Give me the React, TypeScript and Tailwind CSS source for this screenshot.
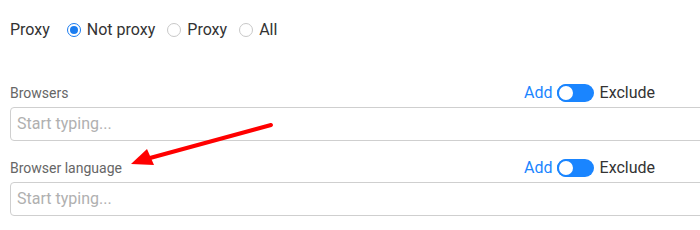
import React from "react";

const font = { fontFamily: "Roboto, 'Liberation Sans', sans-serif" };

function Radio({ label, checked }: { label: string; checked?: boolean }) {
  return (
    <label className="flex items-center gap-[6px]">
      <span
        className={`flex h-[14px] w-[14px] items-center justify-center rounded-full border ${
          checked ? "border-[#1a7cf0]" : "border-[#c8c8c8]"
        }`}
      >
        {checked && <span className="h-[8px] w-[8px] rounded-full bg-[#1a7cf0]" />}
      </span>
      <span className="text-[16px] text-[#333]">{label}</span>
    </label>
  );
}

function Toggle() {
  return (
    <span className="relative flex h-[18px] w-[37px] items-center rounded-full bg-[#1a85ff]">
      <span className="absolute left-0 h-[18px] w-[18px] rounded-full border-2 border-[#1a85ff] bg-white" />
    </span>
  );
}

function Field({ label }: { label: string }) {
  return (
    <div>
      <div className="flex h-[20px] items-center justify-between pr-[45px]">
        <span className="text-[14px] text-[#666]">{label}</span>
        <div className="flex items-center">
          <span className="mr-[4px] text-[16px] text-[#1a85ff]">Add</span>
          <Toggle />
          <span className="ml-[6px] text-[16px] text-[#333]">Exclude</span>
        </div>
      </div>
      <div className="mt-[4px] flex h-[34px] w-[710px] items-center rounded-[4px] border border-[#cfcfcf] px-[6px] text-[16px] text-[#b0b0b0]">
        Start typing...
      </div>
    </div>
  );
}

export default function App() {
  return (
    <div className="relative h-[230px] w-[700px] overflow-hidden bg-white pl-[10px] pt-[20px]" style={font}>
      <div className="flex h-[20px] items-center gap-[17px]">
        <span className="text-[16px] text-[#333]">Proxy</span>
        <div className="flex items-center gap-[12px]">
          <Radio label="Not proxy" checked />
          <Radio label="Proxy" />
          <Radio label="All" />
        </div>
      </div>
      <div className="mt-[43px] flex flex-col gap-[17px]">
        <Field label="Browsers" />
        <Field label="Browser language" />
      </div>
      <svg
        className="pointer-events-none absolute left-0 top-0"
        width="700"
        height="230"
        viewBox="0 0 700 230"
      >
        <line x1="271" y1="125" x2="150" y2="158" stroke="#f00" strokeWidth="4" strokeLinecap="round" />
        <polygon points="131,164 147,149 154,165" fill="#f00" />
      </svg>
    </div>
  );
}
